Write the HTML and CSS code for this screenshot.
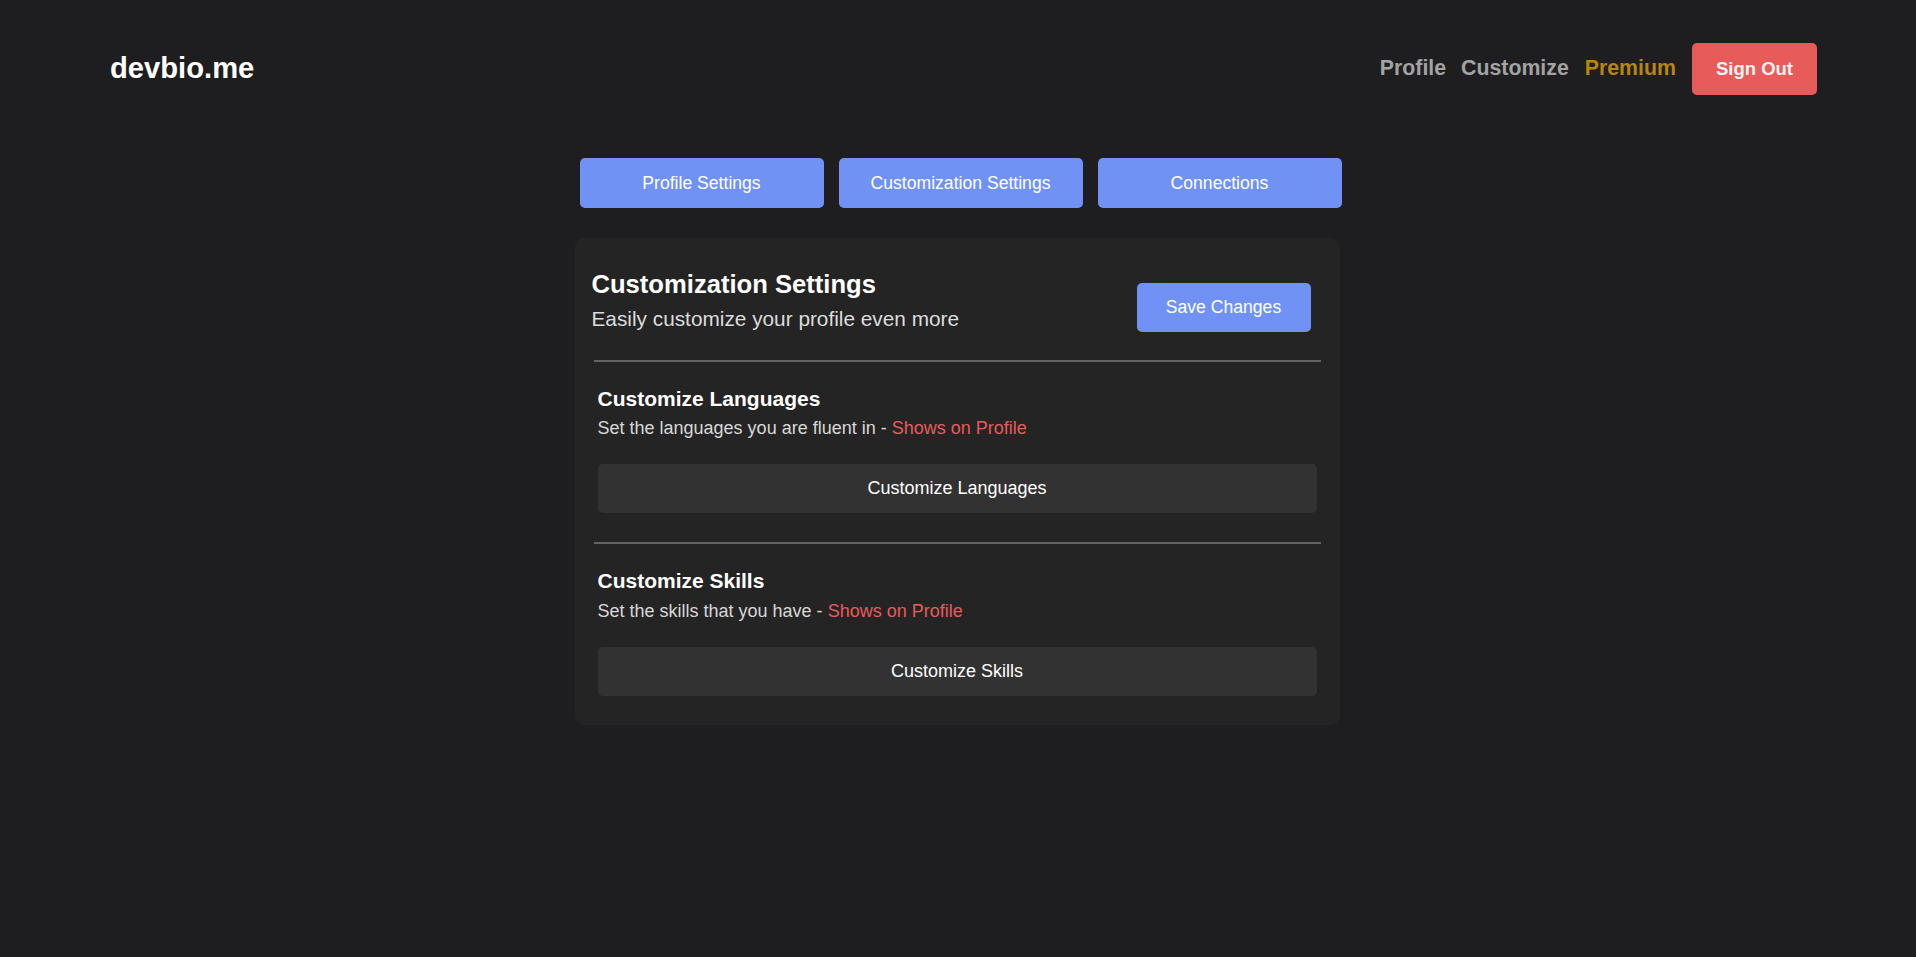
FILE: index.html
```html
<!DOCTYPE html>
<html lang="en">
<head>
<meta charset="utf-8">
<title>devbio.me - Customize</title>
<link rel="stylesheet" href="styles.css">
</head>
<body>
<header class="topbar">
  <a class="logo" href="#">devbio.me</a>
  <nav class="nav">
    <a class="nav-link" href="#">Profile</a>
    <a class="nav-link" href="#">Customize</a>
    <a class="nav-link premium" href="#">Premium</a>
    <button class="btn-signout">Sign Out</button>
  </nav>
</header>
<main class="main">
  <div class="tabs">
    <button class="tab">Profile Settings</button>
    <button class="tab">Customization Settings</button>
    <button class="tab">Connections</button>
  </div>
  <section class="card">
    <div class="card-head">
      <div class="card-title">
        <h1 class="title">Customization Settings</h1>
        <p class="subtitle">Easily customize your profile even more</p>
      </div>
      <button class="btn-save">Save Changes</button>
    </div>
    <hr class="divider">
    <div class="section">
      <h2 class="section-title">Customize Languages</h2>
      <p class="section-desc">Set the languages you are fluent in - <span class="accent">Shows on Profile</span></p>
      <button class="btn-wide">Customize Languages</button>
    </div>
    <hr class="divider">
    <div class="section">
      <h2 class="section-title">Customize Skills</h2>
      <p class="section-desc">Set the skills that you have - <span class="accent">Shows on Profile</span></p>
      <button class="btn-wide">Customize Skills</button>
    </div>
  </section>
</main>
</body>
</html>
```

FILE: styles.css
```css
* { box-sizing: border-box; }

html, body {
  margin: 0;
  padding: 0;
  background: #1e1e20;
  min-height: 100%;
}

body {
  font-family: "Liberation Sans", Arial, sans-serif;
  color: #ffffff;
  min-height: 957px;
}

button {
  font-family: inherit;
  border: 0;
  cursor: pointer;
}

.topbar {
  display: flex;
  justify-content: space-between;
  align-items: center;
  padding: 43px 99px 0 110px;
}

.logo {
  font-size: 29.2px;
  font-weight: 700;
  color: #ffffff;
  text-decoration: none;
  line-height: 1.2;
}

.nav {
  display: flex;
  align-items: center;
  gap: 15px;
}

.nav-link {
  font-size: 21.3px;
  font-weight: 700;
  color: #a3a3a3;
  text-decoration: none;
  line-height: 1.2;
}

.nav-link.premium {
  color: #b8860b;
  margin-left: 1px;
}

.btn-signout {
  height: 52px;
  padding: 0 24px;
  margin-left: 1px;
  background: #e85b5b;
  color: #f2f2f2;
  font-size: 18.5px;
  font-weight: 700;
  border-radius: 5px;
}

.main {
  width: 767px;
  margin: 63px auto 0;
}

.tabs {
  display: grid;
  grid-template-columns: repeat(3, 1fr);
  gap: 15px;
  padding-left: 5px;
}

.tab {
  height: 50px;
  background: #7092f5;
  color: #ffffff;
  font-size: 17.6px;
  border-radius: 5px;
}

.card {
  margin: 30px 2px 0 0;
  background: #242424;
  border-radius: 9px;
}

.card-head {
  display: flex;
  justify-content: space-between;
  align-items: flex-end;
  padding: 31px 29px 0 17px;
}

.title {
  margin: 0;
  font-size: 25.6px;
  font-weight: 700;
  line-height: 1.2;
  color: #ffffff;
}

.subtitle {
  margin: 7px 0 0;
  font-size: 20.8px;
  line-height: 1.2;
  color: #dcdcdc;
}

.btn-save {
  width: 174px;
  height: 49px;
  background: #7092f5;
  color: #ffffff;
  font-size: 17.6px;
  border-radius: 5px;
}

.divider {
  margin: 28px 19px 0;
  border: 0;
  border-top: 2px solid #646464;
  height: 0;
}

.section + .divider {
  margin-top: 0;
}

.section {
  padding: 24px 23px 29px;
}

.section-title {
  margin: 0;
  font-size: 21px;
  font-weight: 700;
  line-height: 1.2;
  color: #ffffff;
}

.section-desc {
  margin: 7px 0 0;
  font-size: 18px;
  line-height: 1.2;
  color: #d8d8d8;
}

.accent {
  color: #e85b5b;
}

.btn-wide {
  display: block;
  width: 100%;
  height: 49px;
  margin-top: 25px;
  background: #323232;
  color: #ffffff;
  font-size: 18px;
  border-radius: 5px;
}
```
